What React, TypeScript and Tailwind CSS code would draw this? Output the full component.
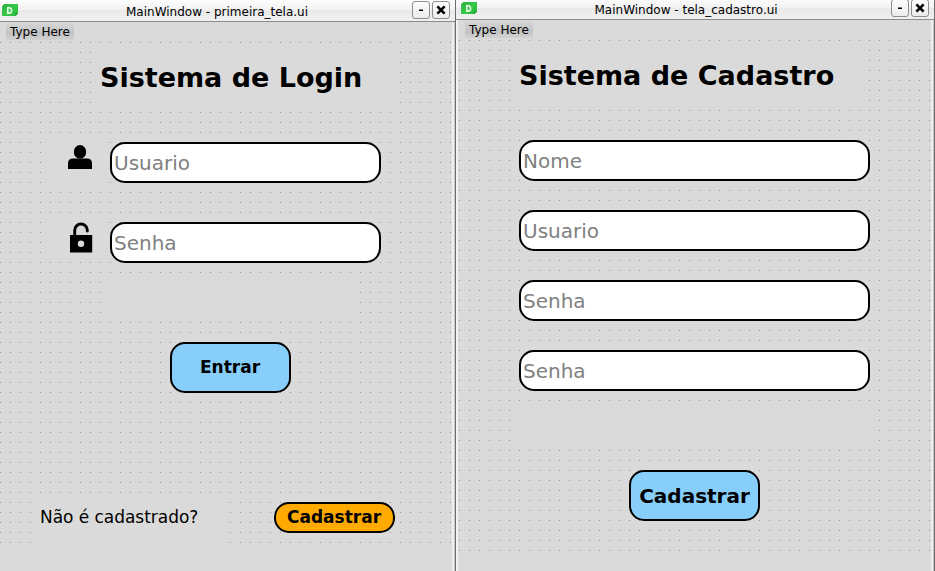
import type { ReactNode } from 'react';

const dots =
  'bg-[#dadada] bg-[linear-gradient(to_bottom,transparent_1px,#dadada_1px),linear-gradient(to_right,#949494_1px,transparent_1px)] bg-[length:10px_10px]';

function DesignerIcon() {
  return (
    <svg className="block" width="16" height="12" viewBox="0 0 16 12">
      <defs>
        <linearGradient id="leaf" x1="0" y1="0" x2="1" y2="1">
          <stop offset="0" stopColor="#2fae45" />
          <stop offset="0.5" stopColor="#35c846" />
          <stop offset="1" stopColor="#2cb83c" />
        </linearGradient>
      </defs>
      <path d="M2.2 0H16V9.5L13.5 12H0V2.2Z" fill="url(#leaf)" />
      <path d="M16 9.5L13.5 12V9.5Z" fill="#1c8f2c" />
      <path d="M5.8 3.7H7.2Q9.6 3.7 9.6 6.4Q9.6 9.1 7.2 9.1H5.8Z" fill="none" stroke="#e6f9e6" strokeWidth="1.6" />
    </svg>
  );
}

function TitleButton({ children }: { children: ReactNode }) {
  return (
    <div className="flex h-[18px] w-[18px] shrink-0 items-center justify-center rounded-[3px] border border-[#8f8f8f] bg-gradient-to-b from-[#fdfdfd] to-[#ececec]">
      {children}
    </div>
  );
}

function TitleBar({ title, wrap, text }: { title: string; wrap: string; text: string }) {
  return (
    <div className={`flex shrink-0 border-b border-[#8c8c8c] ${wrap}`}>
      <div className="mt-[4px] w-[16px] shrink-0">
        <DesignerIcon />
      </div>
      <div className={`mt-[5px] grow whitespace-nowrap text-[12px] leading-[14px] ${text}`}>{title}</div>
      <div className="flex gap-[2px] pt-px">
        <TitleButton>
          <svg className="block" width="16" height="16" viewBox="0 0 16 16">
            <path d="M6 7.5H10V9H6Z" />
          </svg>
        </TitleButton>
        <TitleButton>
          <svg className="block" width="16" height="16" viewBox="0 0 16 16">
            <path d="M4.4 4.4L11.6 11.6M11.6 4.4L4.4 11.6" stroke="#000" strokeWidth="2.6" />
          </svg>
        </TitleButton>
      </div>
    </div>
  );
}

function MenuBar() {
  return (
    <div className="flex h-[20px] shrink-0 pl-[6px] pt-px">
      <div className="h-[17px] w-[68px] whitespace-nowrap bg-gradient-to-b from-[#d6d6d6] via-[#c2c2c2] via-60% to-[#d2d2d2] pl-[4px] text-[12px] leading-[18px]">
        Type Here
      </div>
    </div>
  );
}

function Field({ label, width }: { label: string; width: string }) {
  return (
    <div className={`flex h-[41px] shrink-0 items-center rounded-[15px] border-2 border-black bg-white pl-[2px] text-[20px] leading-[24px] text-[#808080] ${width}`}>
      {label}
    </div>
  );
}

function Edges() {
  return (
    <div className="flex shrink-0">
      <div className="w-[2px] bg-[#efefef]" />
      <div className="w-px bg-[#c4c4c4]" />
    </div>
  );
}

export default function App() {
  return (
    <div className="flex h-[571px] w-[935px] overflow-hidden bg-[#dadada] font-['DejaVu_Sans',sans-serif] text-black">
      <section className="flex w-[456px] shrink-0 border-r border-[#6e6e6e]">
        <div className="flex w-[455px] flex-col">
          <TitleBar
            title="MainWindow - primeira_tela.ui"
            wrap="h-[22px] bg-[linear-gradient(to_bottom,#fdfdfd_0,#f2f2f2_10px,#e9e9e9_10px,#f0f0f0_21px)] pl-[2px] pr-[5px]"
            text="pl-[108px]"
          />
          <div className="flex h-[549px]">
            <div className="w-[452px]">
              <MenuBar />
              <div className={`h-[510px] ${dots}`}>
                <div className="flex flex-col pt-[10px]">
                  <h1 className="ml-[100px] h-[60px] w-[300px] whitespace-nowrap bg-[#dadada] text-[27px] font-bold leading-[52px]">
                    Sistema de Login
                  </h1>
                  <div className="mt-[30px] flex h-[50px] pl-[50px]">
                    <div className="h-[50px] w-[60px] bg-[#dadada] pl-[18px] pt-[3px]">
                      <svg width="24" height="24" viewBox="0 0 24 24">
                        <ellipse cx="12" cy="6.9" rx="6.2" ry="6.9" />
                        <path d="M0 24V18.5Q0 13.4 5 13.4H19Q24 13.4 24 18.5V24Z" />
                      </svg>
                    </div>
                    <Field label="Usuario" width="w-[271px]" />
                  </div>
                  <div className="mt-[30px] flex h-[41px] pl-[50px]">
                    <div className="h-[40px] w-[60px] bg-[#dadada] pl-[19px]">
                      <svg width="24" height="31" viewBox="0 0 24 31">
                        <path d="M5.7 14V8.4A6.3 6.4 0 0 1 18.3 8.4V9" fill="none" stroke="#000" strokeWidth="2.9" strokeLinecap="round" />
                        <path fillRule="evenodd" d="M1 13H23.2V30.6H1ZM12 18.5a3.2 3.2 0 1 0 0 6.4a3.2 3.2 0 1 0 0-6.4Z" />
                      </svg>
                    </div>
                    <Field label="Senha" width="w-[271px]" />
                  </div>
                  <div className="ml-[110px] mt-[19px] h-[40px] w-[250px] bg-[#dadada]" />
                  <div className="ml-[170px] mt-[20px] flex h-[51px] w-[121px] items-center justify-center rounded-[15px] border-2 border-black bg-[#87cefa] pr-px text-[17px] font-bold leading-[21px]">
                    Entrar
                  </div>
                  <div className="mt-[109px] flex pl-[40px]">
                    <div className="h-[50px] w-[190px] whitespace-nowrap bg-[#dadada] text-[17px] leading-[30px] tracking-[-0.04px]">
                      Não é cadastrado?
                    </div>
                    <div className="ml-[44px] flex h-[31px] w-[121px] items-center justify-center rounded-[15px] border-2 border-black bg-[#ffaa00] pb-[2px] pr-px text-[17px] font-bold leading-[20px]">
                      Cadastrar
                    </div>
                  </div>
                </div>
              </div>
            </div>
            <Edges />
          </div>
        </div>
      </section>

      <section className="flex w-[479px] shrink-0 border-r border-[#6e6e6e]">
        <div className="flex w-[478px] flex-col">
          <div className="-mt-[2px] flex flex-col">
            <TitleBar
              title="MainWindow - tela_cadastro.ui"
              wrap="h-[22px] bg-[linear-gradient(to_bottom,#fdfdfd_0,#f2f2f2_10px,#e9e9e9_10px,#f0f0f0_21px)] pl-[5px] pr-[5px]"
              text="pl-[117.5px]"
            />
          </div>
          <div className="flex h-[551px]">
            <div className="w-[2px] shrink-0 bg-[#f2f2f2]" />
            <div className="w-[473px] pl-px">
              <MenuBar />
              <div className={`h-[511px] ${dots}`}>
                <div className="flex flex-col pt-[10px]">
                  <h1 className="ml-[60px] h-[60px] w-[350px] whitespace-nowrap bg-[#dadada] text-[27px] font-bold leading-[52px]">
                    Sistema de Cadastro
                  </h1>
                  <div className="ml-[60px] mt-[30px] flex flex-col gap-[29px]">
                    <Field label="Nome" width="w-[351px]" />
                    <Field label="Usuario" width="w-[351px]" />
                    <Field label="Senha" width="w-[351px]" />
                    <Field label="Senha" width="w-[351px]" />
                  </div>
                  <div className="ml-[60px] mt-[19px] h-[40px] w-[360px] bg-[#dadada]" />
                  <div className="ml-[170px] mt-[20px] flex h-[51px] w-[131px] items-center justify-center rounded-[15px] border-2 border-black bg-[#87cefa] text-[20px] font-bold">
                    Cadastrar
                  </div>
                </div>
              </div>
            </div>
            <Edges />
          </div>
        </div>
      </section>
    </div>
  );
}
